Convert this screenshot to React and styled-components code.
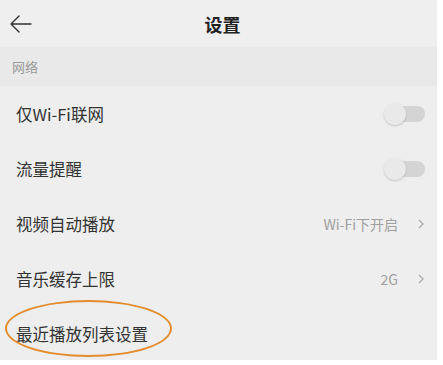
import React from "react";
import styled, { createGlobalStyle } from "styled-components";

const GlobalStyle = createGlobalStyle`
  html, body {
    margin: 0;
    padding: 0;
    background: #ffffff;
    font-family: "Noto Sans CJK SC", "Noto Sans", Roboto, sans-serif;
  }
`;

const Screen = styled.div`
  width: 437px;
  height: 360px;
  background: #eeeeee;
  display: flex;
  flex-direction: column;
  overflow: hidden;
  position: relative;
`;

const Header = styled.div`
  height: 47px;
  flex-shrink: 0;
  display: grid;
  grid-template-columns: 60px 1fr 52px;
  align-items: center;
  background: #efefef;
`;

const BackButton = styled.div`
  display: flex;
  align-items: center;
  padding-left: 9px;
  height: 100%;
`;

const Title = styled.h1`
  margin: 0;
  text-align: center;
  font-size: 18px;
  font-weight: 700;
  color: #222;
`;

const SectionLabel = styled.div`
  height: 39px;
  flex-shrink: 0;
  display: flex;
  align-items: center;
  padding-left: 12px;
  font-size: 13px;
  color: #9a9a9a;
  background: #e9e9e9;
`;

const Row = styled.div`
  height: 55px;
  flex-shrink: 0;
  display: flex;
  align-items: center;
  justify-content: space-between;
  padding: 0 12px 0 16px;
  position: relative;
`;

const Label = styled.span`
  font-size: 16.5px;
  color: #333;
`;

const Right = styled.div`
  display: flex;
  align-items: center;
  gap: 19px;
`;

const Value = styled.span`
  font-size: 14px;
  color: #a0a0a0;
`;

const Toggle = styled.div`
  width: 41px;
  height: 24px;
  position: relative;
  display: flex;
  align-items: center;
`;

const Track = styled.div`
  width: 38px;
  height: 16px;
  margin-left: 3px;
  border-radius: 8px;
  background: #d4d4d4;
`;

const Knob = styled.div`
  position: absolute;
  left: 0;
  top: 1px;
  width: 22px;
  height: 22px;
  border-radius: 50%;
  background: #e9e9e9;
  box-shadow: 0 1px 2px rgba(0, 0, 0, 0.18);
`;

const Highlight = styled.div`
  position: absolute;
  left: 5px;
  top: -6px;
  width: 167px;
  height: 57px;
  border: 2px solid #e38d2f;
  border-radius: 50%;
  box-sizing: border-box;
  pointer-events: none;
`;

const Chevron = () => (
  <svg width="8" height="12" viewBox="0 0 8 12">
    <path d="M2 2 L6 6 L2 10" fill="none" stroke="#aaaaaa" strokeWidth="1.3" />
  </svg>
);

const BackArrow = () => (
  <svg width="24" height="20" viewBox="0 0 24 20">
    <path
      d="M22 10 H3 M10 2 L2 10 L10 18"
      fill="none"
      stroke="#333"
      strokeWidth="1.4"
      strokeLinecap="round"
      strokeLinejoin="round"
    />
  </svg>
);

const Switch = () => (
  <Toggle>
    <Track />
    <Knob />
  </Toggle>
);

export default function App() {
  return (
    <>
      <GlobalStyle />
      <Screen>
        <Header>
          <BackButton>
            <BackArrow />
          </BackButton>
          <Title>设置</Title>
          <div />
        </Header>
        <SectionLabel>网络</SectionLabel>
        <Row>
          <Label>仅Wi-Fi联网</Label>
          <Switch />
        </Row>
        <Row>
          <Label>流量提醒</Label>
          <Switch />
        </Row>
        <Row>
          <Label>视频自动播放</Label>
          <Right>
            <Value>Wi-Fi下开启</Value>
            <Chevron />
          </Right>
        </Row>
        <Row>
          <Label>音乐缓存上限</Label>
          <Right>
            <Value>2G</Value>
            <Chevron />
          </Right>
        </Row>
        <Row>
          <Label>最近播放列表设置</Label>
          <Highlight />
        </Row>
      </Screen>
    </>
  );
}
